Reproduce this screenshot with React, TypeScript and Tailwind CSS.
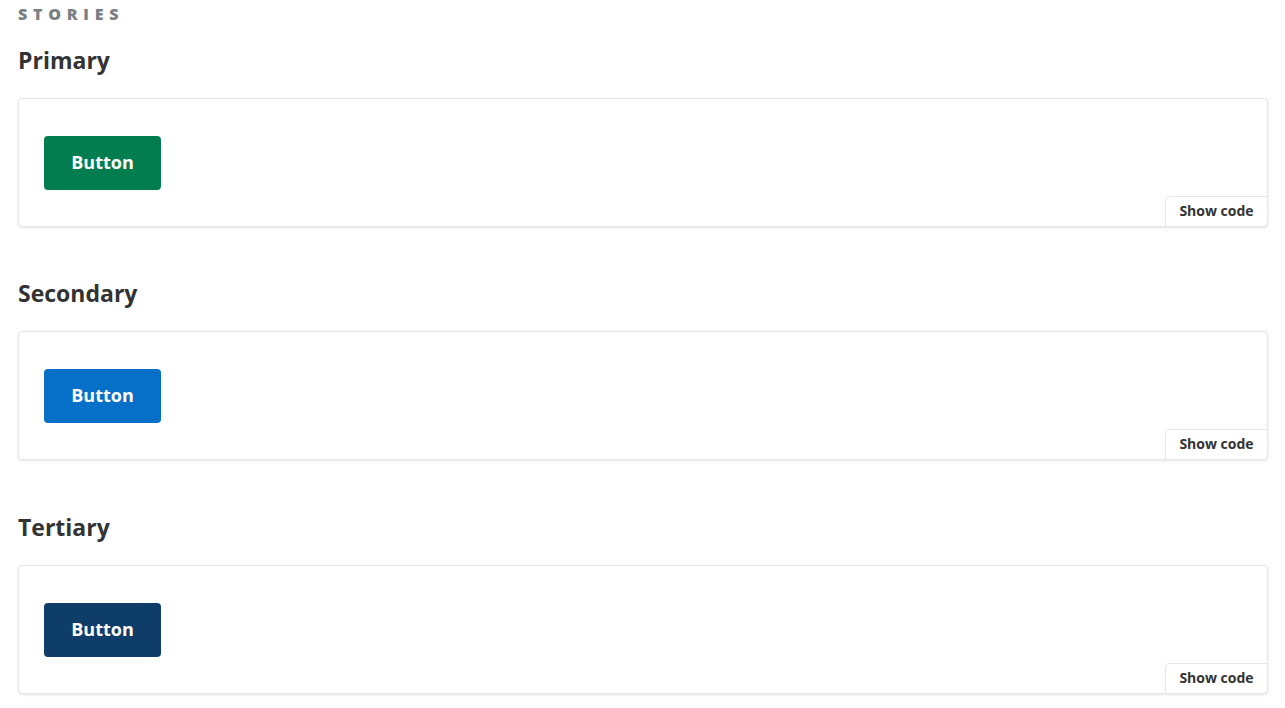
import React from "react";

const stories = [
  { name: "Primary", color: "bg-[#027d50]", mt: "mt-[24px]" },
  { name: "Secondary", color: "bg-[#0670c8]", mt: "mt-[52px]" },
  { name: "Tertiary", color: "bg-[#0e3d6a]", mt: "mt-[53px]" },
];

export default function App() {
  return (
    <div
      className="min-h-[708px] w-full bg-white px-[18px] pr-[17px] text-[#333333]"
      style={{ fontFamily: "'Open Sans', 'Noto Sans', sans-serif" }}
    >
      <div className="pt-[6px] h-[22px] text-[16px] leading-[16px] font-extrabold tracking-[0.36em] text-[#7b7f84] uppercase">
        Stories
      </div>
      {stories.map((s) => (
        <div key={s.name} className={s.mt}>
          <h3 className="h-[28px] text-[23px] leading-[28px] font-bold text-[#333333]">{s.name}</h3>
          <div className="relative mt-[24px] h-[129px] rounded-[4px] border border-[#e6e6e6] bg-white shadow-[0_1px_3px_0_rgba(0,0,0,0.10)] pt-[37px] pl-[25px]">
            <button
              className={`${s.color} flex h-[54px] w-[117px] items-center justify-center rounded-[4px] pb-[2px] text-[18px] leading-[24px] font-bold text-white`}
            >
              Button
            </button>
            <div className="absolute right-[-1px] bottom-[-1px] flex h-[31px] w-[103px] items-center justify-center rounded-tl-[4px] rounded-br-[4px] border border-[#e6e6e6] bg-white pb-[1px] text-[14px] leading-[18px] font-bold text-[#333333]">
              Show code
            </div>
          </div>
        </div>
      ))}
    </div>
  );
}
